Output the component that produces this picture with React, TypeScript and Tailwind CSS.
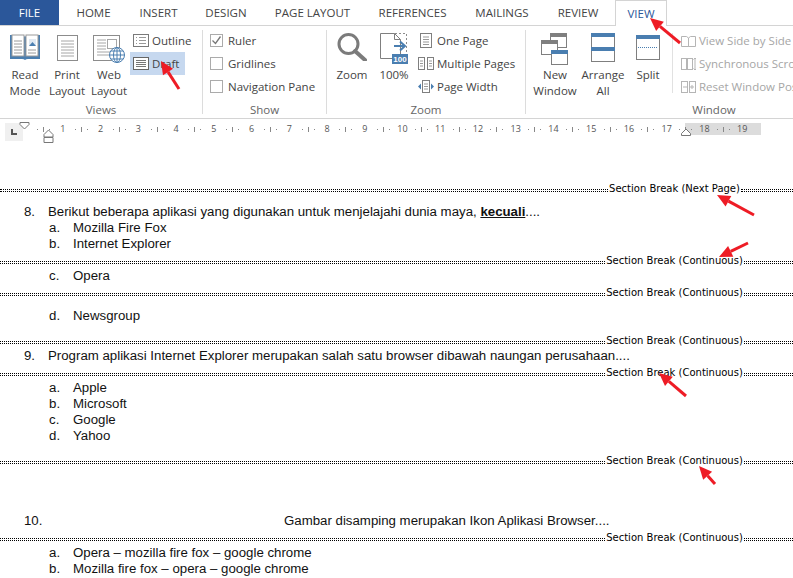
import type { ReactNode } from "react";

const blue = "#4a7eb0";

function ReadIcon() {
  return (
    <svg width="32" height="27" viewBox="0 0 32 27">
      <path d="M1 2h12q2 0 3 2 1-2 3-2h12v24H19q-2 0-3 1-1-1-3-1H1z" fill={blue} />
      <rect x="3" y="2" width="12" height="21" fill="#fff" stroke="#9a9a9a" />
      <rect x="17" y="2" width="12" height="21" fill="#fff" stroke="#9a9a9a" />
      <path d="M5 8h8M5 11h8M5 14h8M5 17h8M5 20h8M19 17h8M19 20h8" stroke="#9a9a9a" />
      <rect x="20" y="6" width="7" height="7" fill="#dfe8f1" />
      <path d="M20 13l3.500-4 3.500 4z" fill={blue} />
    </svg>
  );
}

function PrintIcon() {
  return (
    <svg className="mt-[2px]" width="21" height="26" viewBox="0 0 21 26">
      <rect x="0.500" y="0.500" width="20" height="25" fill="#fff" stroke="#8c8c8c" />
      <path d="M4 6h13M4 9h13M4 12h13M4 15h13M4 18h13M4 21h13" stroke="#a6a6a6" />
    </svg>
  );
}

function WebIcon() {
  return (
    <svg className="mt-[2px]" width="32" height="28" viewBox="0 0 32 28">
      <rect x="0.500" y="0.500" width="26" height="25" fill="#fff" stroke="#8c8c8c" />
      <path d="M4 5h9M4 8h9M4 11h9M4 14h9M4 17h14M4 20h12" stroke="#a6a6a6" />
      <rect x="14.500" y="4.500" width="9" height="9" fill="#fff" stroke="#a6a6a6" />
      <circle cx="24" cy="20" r="7.500" fill="#fff" stroke={blue} />
      <ellipse cx="24" cy="20" rx="3.500" ry="7.500" fill="none" stroke={blue} />
      <path d="M16.500 20h15M18 16h12M18 24h12M24 12.500v15" stroke={blue} />
    </svg>
  );
}

function OutlineIcon() {
  return (
    <svg width="16" height="13" viewBox="0 0 16 13">
      <rect x="0.500" y="0.500" width="15" height="12" fill="#fff" stroke="#7a7a7a" />
      <path d="M3 3.500h1M3 6.500h1M3 9.500h1" stroke="#999" />
      <path d="M6 3.500h7M6 6.500h7M6 9.500h7" stroke="#999" />
    </svg>
  );
}

function DraftIcon() {
  return (
    <svg width="16" height="13" viewBox="0 0 16 13">
      <rect x="0.500" y="0.500" width="15" height="12" fill="#fff" stroke="#666" />
      <path d="M3 3.500h10M3 5.500h10M3 7.500h10M3 9.500h10" stroke="#777" />
    </svg>
  );
}

function MagnifierIcon() {
  return (
    <svg width="30" height="28" viewBox="0 0 30 28">
      <circle cx="11.500" cy="11" r="9.500" fill="#fff" stroke="#7b7b7b" strokeWidth="3" />
      <path d="M18 18l10 9" stroke="#7b7b7b" strokeWidth="4" strokeLinecap="round" />
    </svg>
  );
}

function HundredIcon() {
  return (
    <svg width="28" height="31" viewBox="0 0 28 31">
      <path d="M.5.500h14l6 6v19H.5z" fill="#fff" stroke="#7f7f7f" />
      <path d="M14.500.500v6h6" fill="none" stroke="#7f7f7f" />
      <path d="M15 .5h11.500v19" fill="none" stroke="#8c8c8c" strokeDasharray="2 2" />
      <path d="M14 13h10M20 8.500l5 4.500-5 4.500" fill="none" stroke={blue} strokeWidth="2" />
      <rect x="12" y="21" width="16" height="10" fill={blue} />
      <text x="20" y="29" textAnchor="middle" fontSize="8" fontWeight="700" fill="#fff" fontFamily="Liberation Sans, sans-serif">100</text>
    </svg>
  );
}

function OnePageIcon() {
  return (
    <svg width="12" height="15" viewBox="0 0 12 15">
      <rect x="0.500" y="0.500" width="11" height="14" fill="#fff" stroke="#7f7f7f" />
      <path d="M3 4h6M3 6.500h6M3 9h6M3 11.500h6" stroke="#999" />
    </svg>
  );
}

function MultiPageIcon() {
  return (
    <svg width="16" height="13" viewBox="0 0 16 13">
      <rect x="0.500" y="0.500" width="6" height="12" fill="#fff" stroke="#7f7f7f" />
      <rect x="9.500" y="0.500" width="6" height="12" fill="#fff" stroke="#7f7f7f" />
      <path d="M2 4h3M2 6.500h3M2 9h3M11 4h3M11 6.500h3M11 9h3" stroke="#999" />
    </svg>
  );
}

function PageWidthIcon() {
  return (
    <svg width="16" height="13" viewBox="0 0 16 13">
      <rect x="4.500" y="0.500" width="7" height="12" fill="#fff" stroke="#7f7f7f" />
      <path d="M6 4h4M6 6.500h4M6 9h4" stroke="#999" />
      <path d="M0 6.500l3-3v6zM16 6.500l-3-3v6z" fill={blue} />
    </svg>
  );
}

function NewWindowIcon() {
  return (
    <svg width="28" height="32" viewBox="0 0 28 32">
      <rect x="9.500" y="0.500" width="16" height="14" fill="#fff" stroke="#7f7f7f" />
      <rect x="9" y="0" width="17" height="4" fill="#7f7f7f" />
      <rect x="0.500" y="7.500" width="16" height="14" fill="#fff" stroke="#7f7f7f" />
      <rect x="0" y="7" width="17" height="4" fill="#7f7f7f" />
      <rect x="10.500" y="17.500" width="16" height="14" fill="#fff" stroke="#7f7f7f" />
      <rect x="10" y="17" width="17" height="4" fill={blue} />
    </svg>
  );
}

function ArrangeIcon() {
  return (
    <svg width="24" height="29" viewBox="0 0 24 29">
      <rect x="0.500" y="0.500" width="23" height="28" fill="#fff" stroke="#7f7f7f" />
      <rect x="0" y="0" width="24" height="4" fill={blue} />
      <rect x="0" y="14" width="24" height="4" fill={blue} />
    </svg>
  );
}

function SplitIcon() {
  return (
    <svg className="mt-[2px]" width="24" height="25" viewBox="0 0 24 25">
      <rect x="0.500" y="0.500" width="23" height="24" fill="#fff" stroke="#7f7f7f" />
      <rect x="0" y="0" width="24" height="4" fill={blue} />
      <path d="M2 12.500h20" stroke={blue} strokeDasharray="1 1" />
    </svg>
  );
}

function SideBySideIcon() {
  return (
    <svg width="15" height="12" viewBox="0 0 15 12">
      <path d="M.5 1.500h5l2 1.500v8.500h-7zM14.500 1.500h-5l-2 1.500v8.500h7z" fill="#fff" stroke="#b5b5b5" />
    </svg>
  );
}

function SyncIcon() {
  return (
    <svg width="15" height="14" viewBox="0 0 15 14">
      <rect x="0.500" y="1.500" width="5" height="11" fill="#fff" stroke="#b5b5b5" />
      <rect x="6.500" y="1.500" width="5" height="11" fill="#fff" stroke="#b5b5b5" />
      <path d="M14 1v12M12.500 2.500L14 1l1.500 1.500M12.500 11.500L14 13l1.500-1.500" fill="none" stroke="#b5b5b5" />
    </svg>
  );
}

function ResetIcon() {
  return (
    <svg width="15" height="12" viewBox="0 0 15 12">
      <rect x="0.500" y="0.500" width="6" height="11" fill="#fff" stroke="#b5b5b5" />
      <rect x="8.500" y="0.500" width="6" height="11" fill="#fff" stroke="#b5b5b5" />
      <path d="M2 6h4M9 6h4M11 4v4" stroke="#b5b5b5" />
    </svg>
  );
}

function BigButton({ icon, label, className }: { icon: ReactNode; label: ReactNode; className: string }) {
  return (
    <div className={`flex flex-col items-center pt-1 ${className}`}>
      <div className="flex h-[34px] items-start justify-center">{icon}</div>
      <div className="text-center leading-4">{label}</div>
    </div>
  );
}

function SmallRow({ icon, text, active }: { icon: ReactNode; text: string; active?: boolean }) {
  return (
    <div className={`flex h-[23px] items-center ${active ? "bg-[#c6d8ef]" : ""}`}>
      <div className="flex w-[22px] shrink-0 justify-center">{icon}</div>
      <span className="whitespace-nowrap">{text}</span>
    </div>
  );
}

function Check({ label, checked }: { label: string; checked?: boolean }) {
  return (
    <div className="flex h-[23px] items-center gap-[5px]">
      <div className="flex size-[13px] items-center justify-center border border-[#ababab] bg-white">
        {checked && (
          <svg width="11" height="11" viewBox="0 0 11 11">
            <path d="M1.500 5.500l3 3 5-7" fill="none" stroke="#777" strokeWidth="1.300" />
          </svg>
        )}
      </div>
      <span className="whitespace-nowrap">{label}</span>
    </div>
  );
}

function Group({ width, label, children }: { width: string; label: string; children: ReactNode }) {
  return (
    <div className={`flex shrink-0 flex-col ${width}`}>
      <div className="flex h-[76px] pt-[3px]">{children}</div>
      <div className="h-4 text-center leading-4 text-[#666]">{label}</div>
    </div>
  );
}

const Divider = () => <div className="my-1 w-px shrink-0 bg-[#dcdcdc]" />;

function Ribbon() {
  return (
    <div className="flex h-[93px] border-b border-[#d4d4d4] font-['Open_Sans',sans-serif] text-[11.5px] text-[#444]">
      <Group width="w-[202px]" label="Views">
        <div className="flex pl-1">
          <BigButton className="w-[42px]" icon={<ReadIcon />} label={<>Read<br />Mode</>} />
          <BigButton className="w-[42px]" icon={<PrintIcon />} label={<>Print<br />Layout</>} />
          <BigButton className="w-[42px]" icon={<WebIcon />} label={<>Web<br />Layout</>} />
          <div className="w-[55px]">
            <SmallRow icon={<OutlineIcon />} text="Outline" />
            <SmallRow icon={<DraftIcon />} text="Draft" active />
          </div>
        </div>
      </Group>
      <Divider />
      <Group width="w-[123px]" label="Show">
        <div className="pl-[7px]">
          <Check label="Ruler" checked />
          <Check label="Gridlines" />
          <Check label="Navigation Pane" />
        </div>
      </Group>
      <Divider />
      <Group width="w-[198px]" label="Zoom">
        <div className="flex pl-1">
          <BigButton className="w-[42px]" icon={<MagnifierIcon />} label="Zoom" />
          <BigButton className="w-[42px]" icon={<HundredIcon />} label="100%" />
          <div>
            <SmallRow icon={<OnePageIcon />} text="One Page" />
            <SmallRow icon={<MultiPageIcon />} text="Multiple Pages" />
            <SmallRow icon={<PageWidthIcon />} text="Page Width" />
          </div>
        </div>
      </Group>
      <Divider />
      <Group width="w-[376px]" label="Window">
        <div className="flex pl-[5px]">
          <BigButton className="w-[48px]" icon={<NewWindowIcon />} label={<>New<br />Window</>} />
          <BigButton className="w-[48px]" icon={<ArrangeIcon />} label={<>Arrange<br />All</>} />
          <BigButton className="w-[42px]" icon={<SplitIcon />} label="Split" />
          <div className="my-1 ml-[3px] h-[60px] w-px bg-[#e1e1e1]" />
          <div className="ml-1 text-[#a6a6a6]">
            <SmallRow icon={<SideBySideIcon />} text="View Side by Side" />
            <SmallRow icon={<SyncIcon />} text="Synchronous Scrolling" />
            <SmallRow icon={<ResetIcon />} text="Reset Window Position" />
          </div>
        </div>
      </Group>
    </div>
  );
}

const tabs = [
  { label: "HOME", width: "w-[64px]" },
  { label: "INSERT", width: "w-[66px]" },
  { label: "DESIGN", width: "w-[69px]" },
  { label: "PAGE LAYOUT", width: "w-[104px]" },
  { label: "REFERENCES", width: "w-[96px]" },
  { label: "MAILINGS", width: "w-[83px]" },
  { label: "REVIEW", width: "w-[69px]" },
];

function Tabs() {
  return (
    <div className="flex h-[26px] border-b border-[#d4d4d4] pt-px font-['Open_Sans',sans-serif] text-[11.5px] text-[#444]">
      <div className="-mt-px flex w-[59px] items-center justify-center bg-[#2b579a] text-white">FILE</div>
      <div className="ml-[2.5px] flex">
        {tabs.map((t) => (
          <div key={t.label} className={`flex items-center justify-center ${t.width}`}>
            {t.label}
          </div>
        ))}
      </div>
      <div className="-mt-px ml-[2.5px] flex h-[26px] w-[52px] items-center justify-center border-x border-t border-[#d4d4d4] bg-white text-[#2b579a]">
        VIEW
      </div>
    </div>
  );
}

function Ruler() {
  return (
    <div className="mt-1 flex h-3 pl-[5px] font-['Open_Sans',sans-serif] text-[9px] text-[#555]">
      <div className="relative h-[18px] w-[18px] shrink-0 bg-[#f0f0f0]">
        <div className="mt-[6px] ml-[6px] h-[6px] w-[6px] border-b-2 border-l-2 border-[#555]" />
      </div>
      <div className="flex h-3 w-[738px] bg-[linear-gradient(90deg,#fff_662px,#dcdcdc_662px)] pl-2">
        {Array.from({ length: 19 }, (_, i) => (
          <div key={i} className="flex w-[37.75px] shrink-0 items-center">
            <div className="flex flex-1 items-center justify-around px-1">
              <span className="h-px w-px bg-[#888]" />
              <span className="h-[5px] w-px bg-[#888]" />
              <span className="h-px w-px bg-[#888]" />
            </div>
            <span className="w-[12px] text-center leading-3">{i + 1}</span>
          </div>
        ))}
      </div>
    </div>
  );
}

function SectionBreak({ label, className = "" }: { label: string; className?: string }) {
  return (
    <div className={`flex h-[14px] w-[1349px] items-end font-['DejaVu_Sans',sans-serif] text-[10px] leading-4 text-black ${className}`}>
      <div className="mb-[3px] h-[3px] flex-1 border-y border-dotted border-black" />
      <span className="self-start whitespace-nowrap px-px">Section Break ({label})</span>
      <div className="mb-[3px] h-[3px] flex-1 border-y border-dotted border-black" />
    </div>
  );
}

function Question({ num, children, className = "" }: { num: string; children: ReactNode; className?: string }) {
  return (
    <div className={`flex h-4 pl-6 leading-[18px] ${className}`}>
      <span className="w-6 shrink-0">{num}</span>
      <span className="whitespace-nowrap">{children}</span>
    </div>
  );
}

function Option({ letter, children, className = "" }: { letter: string; children: ReactNode; className?: string }) {
  return (
    <div className={`flex h-4 pl-[49px] leading-[18px] ${className}`}>
      <span className="w-6 shrink-0">{letter}.</span>
      <span className="whitespace-nowrap">{children}</span>
    </div>
  );
}

function Document() {
  return (
    <div className="pt-[46px] font-['Liberation_Sans',sans-serif] text-[13.25px] text-[#111]">
      <SectionBreak label="Next Page" />
      <Question num="8." className="mt-2">
        Berikut beberapa aplikasi yang digunakan untuk menjelajahi dunia maya, <b className="underline">kecuali</b>....
      </Question>
      <Option letter="a">Mozilla Fire Fox</Option>
      <Option letter="b">Internet Explorer</Option>
      <SectionBreak label="Continuous" className="mt-[2px]" />
      <Option letter="c">Opera</Option>
      <SectionBreak label="Continuous" className="mt-[2px]" />
      <Option letter="d" className="mt-2">Newsgroup</Option>
      <SectionBreak label="Continuous" className="mt-[10px]" />
      <Question num="9.">Program aplikasi Internet Explorer merupakan salah satu browser dibawah naungan perusahaan....</Question>
      <SectionBreak label="Continuous" className="mt-[2px]" />
      <Option letter="a">Apple</Option>
      <Option letter="b">Microsoft</Option>
      <Option letter="c">Google</Option>
      <Option letter="d">Yahoo</Option>
      <SectionBreak label="Continuous" className="mt-[10px]" />
      <Question num="10." className="mt-[45px]">
        <span className="ml-[236px]">Gambar disamping merupakan Ikon Aplikasi Browser....</span>
      </Question>
      <SectionBreak label="Continuous" className="mt-[2px]" />
      <Option letter="a">Opera – mozilla fire fox – google chrome</Option>
      <Option letter="b">Mozilla fire fox – opera – google chrome</Option>
    </div>
  );
}

// tip x, tip y, tail x, tail y
const arrows = [
  [161, 61, 179, 89],
  [650, 18, 680, 43],
  [717, 195, 754, 215],
  [719, 257, 748, 243],
  [659, 373, 686, 396],
  [699, 466, 715, 484],
];

function Arrows() {
  return (
    <svg className="pointer-events-none absolute inset-0" width="793" height="578">
      {arrows.map(([x1, y1, x2, y2], i) => {
        const len = Math.hypot(x2 - x1, y2 - y1);
        const ux = (x2 - x1) / len;
        const uy = (y2 - y1) / len;
        const bx = x1 + ux * 13;
        const by = y1 + uy * 13;
        const hx = -uy * 6;
        const hy = ux * 6;
        return (
          <g key={i}>
            <line x1={bx} y1={by} x2={x2} y2={y2} stroke="#ee1c25" strokeWidth="3" />
            <polygon points={`${x1},${y1} ${bx + hx},${by + hy} ${bx - hx},${by - hy}`} fill="#ee1c25" />
          </g>
        );
      })}
    </svg>
  );
}

function RulerMarkers() {
  return (
    <svg className="pointer-events-none absolute inset-0" width="793" height="578">
      <path d="M20 122.500h9v2l-4.500 4.500-4.500-4.500z" fill="#fff" stroke="#777" />
      <path d="M44 134.500l4.500-4.500 4.500 4.500v2.500h-9zM44 137.500h9v5h-9z" fill="#fff" stroke="#777" />
      <path d="M681.500 135.500v-2l4.500-4.500 4.500 4.500v2z" fill="#fff" stroke="#777" />
    </svg>
  );
}

export default function App() {
  return (
    <div className="relative h-[578px] w-[793px] overflow-hidden bg-white">
      <Tabs />
      <Ribbon />
      <Ruler />
      <Document />
      <RulerMarkers />
      <Arrows />
    </div>
  );
}
